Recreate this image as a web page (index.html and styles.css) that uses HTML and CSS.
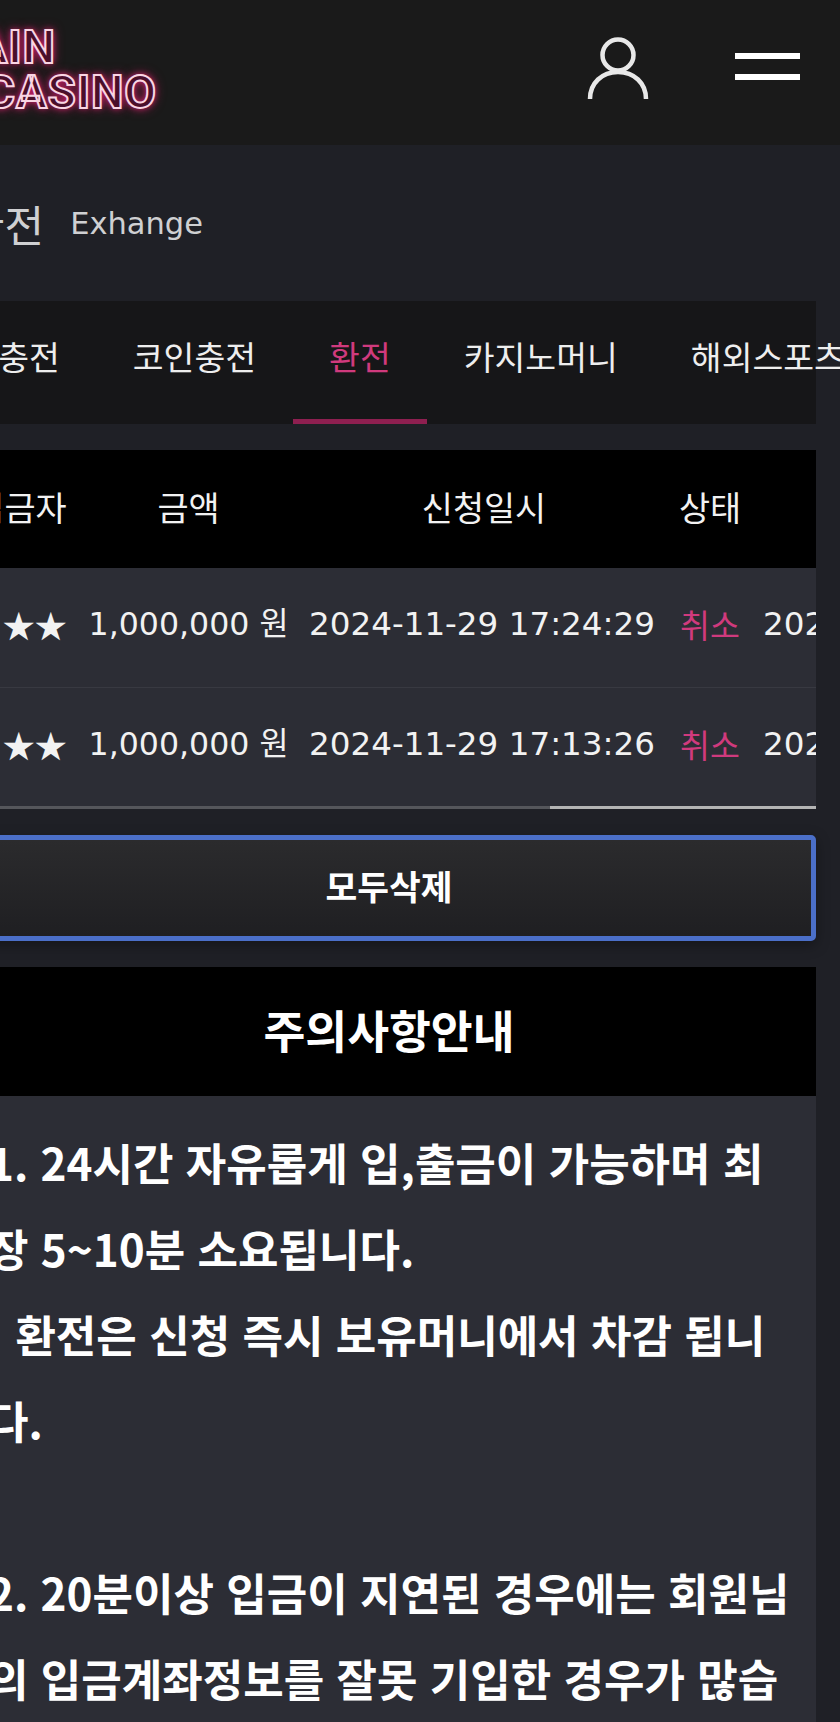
FILE: index.html
```html
<!DOCTYPE html>
<html lang="ko">
<head>
    <meta charset="UTF-8">
    <meta name="viewport" content="width=device-width, initial-scale=1.0">
    <title>환전 - Main Casino</title>
    <link rel="stylesheet" href="styles.css">
</head>
<body>
    <div class="page">
        <header class="site-header">
            <a href="#" class="logo">
                <span class="logo-top">MAIN</span>
                <span class="logo-bottom">CASINO</span>
            </a>
            <div class="header-icons">
                <a href="#" class="icon-user" aria-label="내 정보">
                    <svg width="62" height="64" viewBox="0 0 62 64" fill="none" stroke="#e8e8e8" stroke-width="4.5">
                        <circle cx="31" cy="18" r="15.5"/>
                        <path d="M3 62 C3 46 15 35 31 35 C47 35 59 46 59 62"/>
                    </svg>
                </a>
                <a href="#" class="icon-menu" aria-label="메뉴">
                    <span></span>
                    <span></span>
                </a>
            </div>
        </header>

        <main class="content">
            <div class="page-title">
                <h2>환전</h2>
                <span>Exhange</span>
            </div>

            <nav class="tabs">
                <div class="tab-list">
                    <a href="#">계좌충전</a>
                    <a href="#">코인충전</a>
                    <a href="#" class="active">환전</a>
                    <a href="#">카지노머니</a>
                    <a href="#">해외스포츠</a>
                </div>
            </nav>

            <div class="table-wrap">
                <table class="history">
                    <colgroup>
                        <col class="col-name">
                        <col class="col-amount">
                        <col class="col-date">
                        <col class="col-status">
                        <col class="col-done">
                    </colgroup>
                    <thead>
                        <tr>
                            <th>입금자</th>
                            <th>금액</th>
                            <th class="th-date">신청일시</th>
                            <th>상태</th>
                            <th></th>
                        </tr>
                    </thead>
                    <tbody>
                        <tr>
                            <td class="name">김★★</td>
                            <td class="amount">1,000,000 원</td>
                            <td>2024-11-29 17:24:29</td>
                            <td class="status">취소</td>
                            <td class="done">2024-11-29 17:30:02</td>
                        </tr>
                        <tr>
                            <td class="name">김★★</td>
                            <td class="amount">1,000,000 원</td>
                            <td>2024-11-29 17:13:26</td>
                            <td class="status">취소</td>
                            <td class="done">2024-11-29 17:20:41</td>
                        </tr>
                    </tbody>
                </table>
            </div>
            <div class="scroll-track"><div class="scroll-thumb"></div></div>

            <button class="delete-all" type="button">모두삭제</button>

            <section class="notice">
                <h3>주의사항안내</h3>
                <p>
                    1. 24시간 자유롭게 입,출금이 가능하며 최<br>
                    장 5~10분 소요됩니다.<br>
                    &nbsp;&nbsp;&#8202;환전은 신청 즉시 보유머니에서 차감 됩니<br>
                    다.<br>
                    <br>
                    2. 20분이상 입금이 지연된 경우에는 회원님<br>
                    의 입금계좌정보를 잘못 기입한 경우가 많습<br>
                    니다.
                </p>
            </section>
        </main>
    </div>
</body>
</html>
```

FILE: styles.css
```css
html, body {
    margin: 0;
    padding: 0;
    height: 100%;
    overflow: hidden;
    background-color: #1f2026;
}
body {
    font-family: "DejaVu Sans", "Noto Sans CJK KR", sans-serif;
    color: #fff;
}
a {
    color: inherit;
    text-decoration: none;
}
.page {
    width: 902px;
    margin-left: -62px;
}

/* header */
.site-header {
    height: 145px;
    background-color: #1a1a1a;
    display: flex;
    justify-content: space-between;
    box-sizing: border-box;
    padding-right: 40px;
}
.logo {
    display: flex;
    flex-direction: column;
    padding-top: 25px;
    font-family: "Roboto", sans-serif;
    font-weight: 700;
    font-size: 46px;
    line-height: 45px;
    letter-spacing: 0.8px;
    color: #4a0f2a;
    -webkit-text-stroke: 2px #f9d5e3;
    text-shadow: 0 0 6px #d8246e, 0 0 12px #a81a55;
}
.logo-top {
    margin-left: -3px;
}
.logo-bottom {
    margin-left: 47px;
}
.header-icons {
    display: flex;
    gap: 86px;
    padding: 37px 0 0 1px;
}
.icon-menu {
    display: flex;
    flex-direction: column;
    gap: 15px;
    padding-top: 16px;
}
.icon-menu span {
    display: block;
    width: 65px;
    height: 6px;
    background-color: #fff;
}

/* content */
.content {
    margin: 0 24px;
}
.page-title {
    height: 156px;
    display: flex;
    align-items: center;
    gap: 26px;
    padding-left: 3px;
}
.page-title h2 {
    margin: 0;
    font-family: "Noto Sans CJK KR", sans-serif;
    font-weight: 400;
    font-size: 43px;
    color: #cfd0d2;
}
.page-title span {
    font-size: 30.5px;
    color: #cfd0d2;
}

/* tabs */
.tabs {
    height: 123px;
    background-color: #161618;
}
.tab-list {
    display: flex;
    margin-left: -62px;
    height: 100%;
}
.tab-list a {
    flex: none;
    box-sizing: border-box;
    height: 100%;
    padding: 0 36.5px 15px;
    display: flex;
    align-items: center;
    font-family: "Noto Sans CJK KR", sans-serif;
    font-size: 33.5px;
    color: #eee;
}
.tab-list a.active {
    color: #d03a7d;
    border-bottom: 5px solid #8e1f50;
    padding-bottom: 10px;
}

/* table */
.table-wrap {
    margin-top: 26px;
    overflow: hidden;
}
.history {
    border-collapse: collapse;
    table-layout: fixed;
    width: 993px;
    font-size: 32.6px;
    line-height: 40px;
}
.col-name { width: 116px; }
.col-amount { width: 221px; }
.col-date { width: 366px; }
.col-status { width: 90px; }
.col-done { width: 200px; }
.history th {
    box-sizing: border-box;
    height: 118px;
    padding: 0 0 5px;
    background-color: #000;
    font-family: "Noto Sans CJK KR", sans-serif;
    font-size: 33.8px;
    font-weight: 400;
    color: #f2f2f2;
}
.history th.th-date {
    padding-left: 4px;
}
.history td {
    box-sizing: border-box;
    height: 119px;
    padding: 0 0 6px;
    background-color: #2c2d35;
    text-align: center;
    white-space: nowrap;
    color: #f2f2f2;
}
.history tbody tr + tr td {
    border-top: 1px solid #383941;
}
.history td.name {
    font-family: "Noto Sans CJK KR", sans-serif;
    font-size: 32px;
}
.history td.amount {
    font-size: 31.6px;
}
.history td.status {
    font-family: "Noto Sans CJK KR", sans-serif;
    font-size: 32.5px;
    color: #d03a7d;
}
.history td.done {
    text-align: left;
    padding-left: 8px;
}
.scroll-track {
    height: 3px;
    background-color: #55565b;
}
.scroll-thumb {
    height: 100%;
    margin-left: 588px;
    background-color: #b4b4b4;
}

/* button */
.delete-all {
    display: block;
    box-sizing: border-box;
    width: 100%;
    height: 106px;
    margin-top: 26px;
    padding: 0 0 6px;
    border: 5px solid #4b6fc8;
    border-radius: 5px;
    background: linear-gradient(#2b2b2d, #1f1f22);
    box-shadow: 0 4px 14px rgba(0, 0, 0, 0.35);
    color: #fff;
    font-family: "Noto Sans CJK KR", sans-serif;
    font-size: 34.5px;
    font-weight: 700;
}

/* notice */
.notice {
    margin-top: 26px;
    background-color: #2c2d35;
    height: 800px;
}
.notice h3 {
    margin: 0;
    box-sizing: border-box;
    height: 129px;
    padding-bottom: 6px;
    display: flex;
    align-items: center;
    justify-content: center;
    background-color: #000;
    font-family: "Noto Sans CJK KR", sans-serif;
    font-size: 45.5px;
    font-weight: 700;
}
.notice p {
    margin: 0;
    padding: 23px 0 0 26px;
    font-family: "Noto Sans CJK KR", sans-serif;
    font-size: 44px;
    font-weight: 700;
    line-height: 86px;
    white-space: nowrap;
}
```
